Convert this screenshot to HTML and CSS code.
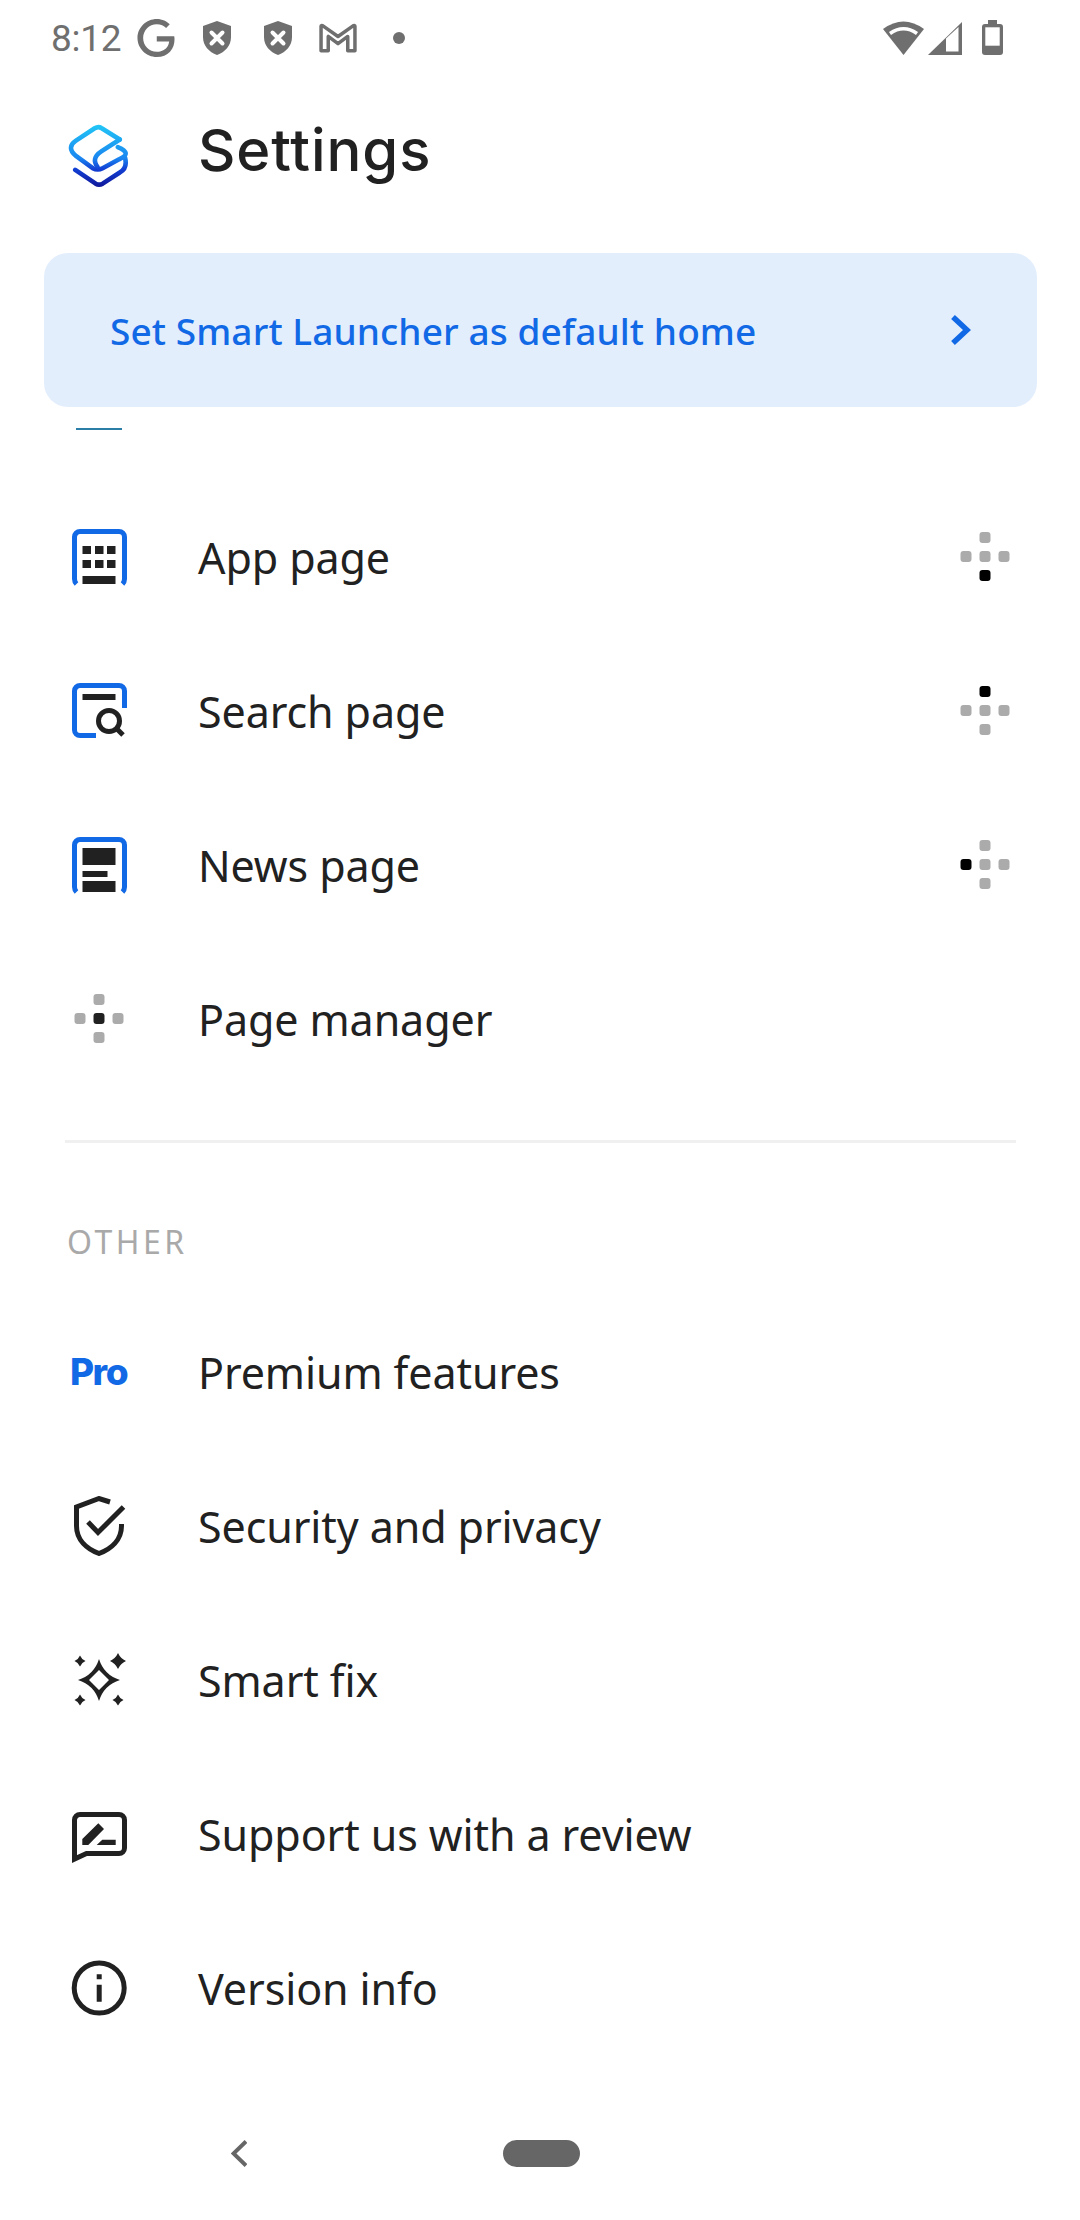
FILE: index.html
```html
<!DOCTYPE html>
<html lang="en">
<head>
<meta charset="utf-8">
<title>Settings</title>
<link rel="stylesheet" href="styles.css">
</head>
<body>
<div class="page">
  <header class="status">
    <span class="time">8:12</span>
    <svg class="si-g" viewBox="0 0 24 24"><path class="g" d="M12.48 10.92v3.28h7.84c-.24 1.84-.853 3.187-1.787 4.133-1.147 1.147-2.933 2.4-6.053 2.4-4.827 0-8.6-3.893-8.6-8.72s3.773-8.72 8.6-8.72c2.6 0 4.507 1.027 5.907 2.347l2.307-2.307C18.747 1.44 16.133 0 12.48 0 5.867 0 .307 5.387.307 12s5.56 12 12.173 12c3.573 0 6.267-1.173 8.373-3.36 2.16-2.16 2.84-5.213 2.84-7.667 0-.76-.053-1.467-.173-2.053H12.48z"/></svg>
    <svg class="si-shield" viewBox="0 0 28 34"><path class="g" d="M14 0 L28 5 V16 C28 25 22 31 14 34 C6 31 0 25 0 16 V5 Z"/><path class="wline" d="M8.5 11.5 L19.5 22.5 M19.5 11.5 L8.5 22.5"/></svg>
    <svg class="si-shield s2" viewBox="0 0 28 34"><path class="g" d="M14 0 L28 5 V16 C28 25 22 31 14 34 C6 31 0 25 0 16 V5 Z"/><path class="wline" d="M8.5 11.5 L19.5 22.5 M19.5 11.5 L8.5 22.5"/></svg>
    <svg class="si-m" viewBox="0 0 37 29"><path class="gline" d="M2 27 V3 Q2 2 3.5 2.5 L18.5 13 L33.5 2.5 Q35 2 35 3 V27 H28 V13 L18.5 20 L9 13 V27 Z"/></svg>
    <span class="si-dot"></span>
    <span class="status-right">
      <svg class="si-wifi" viewBox="0 0 41 34"><path class="g" d="M20.5 34 L0 8 Q20.5 -7 41 8 Z"/><path class="wband" d="M7 12.5 Q20.5 3 34 12.5"/></svg>
      <svg class="si-signal" viewBox="0 0 34 33"><path class="g" d="M0 33 L34 0 V33 Z"/><path class="w" d="M18 16.5 L30.5 5 V29.5 H18 Z"/></svg>
      <svg class="si-batt" viewBox="0 0 21 35"><rect class="g" x="6" y="0" width="9" height="5"/><rect class="g" x="0" y="4" width="21" height="31" rx="3"/><rect class="w" x="3.3" y="7.3" width="14.4" height="18.4"/></svg>
    </span>
  </header>

  <section class="head">
    <svg class="logo" viewBox="195 360 185 200">
      <defs>
        <linearGradient id="lg" gradientUnits="userSpaceOnUse" x1="0" y1="365" x2="0" y2="556">
          <stop offset="0" stop-color="#22c8f6"/>
          <stop offset=".55" stop-color="#1a86f0"/>
          <stop offset=".72" stop-color="#1240d4"/>
          <stop offset="1" stop-color="#10189a"/>
        </linearGradient>
      </defs>
      <path class="logo-s" d="M352 413 L296 378 Q287 372 276 379 L218 417 Q190 436 218 462 L270 500 Q285 508 300 500 L350 473 Q392 455 346 436"/>
      <path class="logo-s" d="M352 413 L296 449 Q264 470 285 497"/>
      <path class="logo-s" d="M217 505 L279 547 Q289 553 300 547 L352 513 Q376 500 368 468"/>
    </svg>
    <h1 class="title">Settings</h1>
  </section>

  <a class="banner">
    <span class="banner-text">Set Smart Launcher as default home</span>
    <svg class="banner-chev" viewBox="0 0 21 30"><path d="M3 2 L17 15 L3 28"/></svg>
  </a>

  <div class="clipped"></div>

  <ul class="list">
    <li class="row">
      <svg class="ico" viewBox="0 0 60 60"><path class="frame" d="M6.5 57 Q4.5 55 4.5 52 V10 a5.500 5.500 0 0 1 5.500-5.500 H49 a5.500 5.500 0 0 1 5.500 5.500 V52 Q54.500 55 52.500 57"/><path class="dk" d="M12.500 19h8.500v8h-8.500zM25 19h8.500v8H25zM37 19h8.500v8H37zM12.500 33h8.500v8h-8.500zM25 33h8.500v8H25zM37 33h8.500v8H37zM12.500 49h33v8h-33z"/></svg>
      <span class="label">App page</span>
      <svg class="ico dots" viewBox="0 0 60 60"><rect class="d" x="23.500" y="5" width="11" height="11" rx="3"/><rect class="d" x="4.500" y="24" width="11" height="11" rx="3"/><rect class="d" x="23.500" y="24" width="11" height="11" rx="3"/><rect class="d" x="42.500" y="24" width="11" height="11" rx="3"/><rect class="on" x="23.500" y="43" width="11" height="11" rx="3"/></svg>
    </li>
    <li class="row">
      <svg class="ico" viewBox="0 0 60 60"><path class="frame" d="M54.500 27 V10 a5.500 5.500 0 0 0-5.500-5.500 H10 a5.500 5.500 0 0 0-5.500 5.500 V49 a5.500 5.500 0 0 0 5.500 5.500 H26"/><path class="dk" d="M12.500 13h33v6h-33z"/><circle class="dkline" cx="39" cy="40" r="10.500"/><path class="dkline" d="M46.500 47.500 L53 54"/></svg>
      <span class="label">Search page</span>
      <svg class="ico dots" viewBox="0 0 60 60"><rect class="on" x="23.500" y="5" width="11" height="11" rx="3"/><rect class="d" x="4.500" y="24" width="11" height="11" rx="3"/><rect class="d" x="23.500" y="24" width="11" height="11" rx="3"/><rect class="d" x="42.500" y="24" width="11" height="11" rx="3"/><rect class="d" x="23.500" y="43" width="11" height="11" rx="3"/></svg>
    </li>
    <li class="row">
      <svg class="ico" viewBox="0 0 60 60"><path class="frame" d="M6.500 57 Q4.500 55 4.500 52 V10 a5.500 5.500 0 0 1 5.500-5.500 H49 a5.500 5.500 0 0 1 5.500 5.500 V52 Q54.500 55 52.500 57"/><path class="dk" d="M12.500 13h33v17h-33zM12.500 36h25v6h-25zM12.500 46h33v11h-33z"/></svg>
      <span class="label">News page</span>
      <svg class="ico dots" viewBox="0 0 60 60"><rect class="d" x="23.500" y="5" width="11" height="11" rx="3"/><rect class="on" x="4.500" y="24" width="11" height="11" rx="3"/><rect class="d" x="23.500" y="24" width="11" height="11" rx="3"/><rect class="d" x="42.500" y="24" width="11" height="11" rx="3"/><rect class="d" x="23.500" y="43" width="11" height="11" rx="3"/></svg>
    </li>
    <li class="row">
      <svg class="ico" viewBox="0 0 60 60"><rect class="d" x="23.500" y="5" width="11" height="11" rx="3"/><rect class="d" x="4.500" y="24" width="11" height="11" rx="3"/><rect class="dkf" x="23.500" y="24" width="11" height="11" rx="3"/><rect class="d" x="42.500" y="24" width="11" height="11" rx="3"/><rect class="d" x="23.500" y="43" width="11" height="11" rx="3"/></svg>
      <span class="label">Page manager</span>
    </li>
  </ul>

  <div class="divider"></div>
  <h2 class="section">OTHER</h2>

  <ul class="list">
    <li class="row">
      <span class="ico pro">Pro</span>
      <span class="label">Premium features</span>
    </li>
    <li class="row">
      <svg class="ico" viewBox="0 0 60 60"><path class="dkline" d="M40 6 L29 2.500 L6.500 11 V30 C6.500 44 17 53 29 57.500 C41 53 51.500 44 51.500 30 V28"/><path class="dkline" d="M18 26 L28 36.500 L53.500 11"/></svg>
      <span class="label">Security and privacy</span>
    </li>
    <li class="row">
      <svg class="ico" viewBox="0 0 60 60"><path class="dk eo" d="M29 9 Q34 25 50 30 Q34 35 29 51 Q24 35 8 30 Q24 25 29 9Z M29 20 L19 30 L29 40 L39 30Z"/><path class="dk" d="M10 5.500 Q11.600 9.400 15.500 11 Q11.600 12.600 10 16.500 Q8.400 12.600 4.500 11 Q8.400 9.400 10 5.500Z M48 3 Q50.500 8.500 56 11 Q50.500 13.500 48 19 Q45.500 13.500 40 11 Q45.500 8.500 48 3Z M10 44.500 Q11.600 48.400 15.500 50 Q11.600 51.600 10 55.500 Q8.400 51.600 4.500 50 Q8.400 48.400 10 44.500Z M48 44.500 Q49.600 48.400 53.500 50 Q49.600 51.600 48 55.500 Q46.400 51.600 42.500 50 Q46.400 48.400 48 44.500Z"/></svg>
      <span class="label">Smart fix</span>
    </li>
    <li class="row">
      <svg class="ico" viewBox="0 0 60 60"><path class="dkline" d="M4.500 55 V16 a5.500 5.500 0 0 1 5.500-5.500 H49 a5.500 5.500 0 0 1 5.500 5.500 V44 a5.500 5.500 0 0 1-5.500 5.500 H16.500 Z"/><path class="dk" d="M12.300 41 V35 L28.300 19.300 L34 25 L18.300 41Z M26.700 41 L32.300 35.700 H45.700 V41Z"/></svg>
      <span class="label">Support us with a review</span>
    </li>
    <li class="row">
      <svg class="ico" viewBox="0 0 60 60"><circle class="dkline" cx="29.200" cy="30" r="25"/><path class="dk" d="M26.700 16.300h5v5h-5zM26.700 26.700h5v17h-5z"/></svg>
      <span class="label">Version info</span>
    </li>
  </ul>

  <nav class="nav">
    <svg class="nav-back" viewBox="0 0 16 27"><path d="M15 1.500 L2.500 13.500 L15 25.500"/></svg>
    <span class="nav-home"></span>
  </nav>
</div>
</body>
</html>
```
FILE: styles.css
```css
* { box-sizing: border-box; }
html, body { margin: 0; padding: 0; background: #fff; }
body { font-family: "Noto Sans", "Open Sans", sans-serif; color: #212121; }
ul { list-style: none; margin: 0; padding: 0; }
h1, h2 { margin: 0; }
.page { width: 1080px; height: 2220px; overflow: hidden; display: flex; flex-direction: column; }

.status { height: 74px; flex: none; display: flex; align-items: flex-start; padding: 19px 77px 0 51px; }
.time { font-family: Roboto, sans-serif; font-size: 37px; line-height: 40px; color: #6f6f6f; width: 86px; letter-spacing: -.3px; }
.g { fill: #6f6f6f; }
.w { fill: #fff; }
.wline { stroke: #fff; stroke-width: 4; fill: none; stroke-linecap: round; }
.wband { stroke: #fff; stroke-width: 3.5; fill: none; }
.gline { stroke: #6f6f6f; stroke-width: 3.4; fill: none; stroke-linejoin: round; }
.si-g { width: 38px; height: 38px; margin-right: 28px; }
.si-shield { width: 28px; height: 34px; margin: 2px 33px 0 0; }
.si-shield.s2 { margin-right: 27px; }
.si-m { width: 38px; height: 30px; margin: 4px 36px 0 0; }
.si-dot { width: 12px; height: 12px; border-radius: 50%; background: #6f6f6f; margin-top: 13px; }
.status-right { margin-left: auto; display: flex; align-items: flex-start; }
.si-wifi { width: 41px; height: 34px; margin: 2px 4px 0 0; }
.si-signal { width: 34px; height: 33px; margin: 3px 20px 0 0; }
.si-batt { width: 21px; height: 35px; margin-top: 1px; }

.head { height: 179px; flex: none; display: flex; align-items: flex-start; padding: 48px 0 0 68px; }
.logo { width: 61px; height: 66px; flex: none; }
.logo-s { fill: none; stroke: url(#lg); stroke-width: 14; stroke-linecap: round; stroke-linejoin: round; }
.title { font-family: Inter, sans-serif; font-weight: 500; font-size: 58px; line-height: 66px; color: #212121; margin: -5px 0 0 69px; letter-spacing: .9px; }

.banner { height: 154px; flex: none; margin: 0 43px 0 44px; background: #e3eefd; border-radius: 24px; display: flex; align-items: center; justify-content: space-between; padding: 0 66px; }
.banner-text { font-size: 37px; font-weight: 500; color: #1269e6; letter-spacing: .1px; }
.banner-chev { width: 21px; height: 30px; }
.banner-chev path { fill: none; stroke: #1269e6; stroke-width: 5.5; }

.clipped { width: 46px; height: 2px; flex: none; margin: 21px 0 50px 76px; background: #2b7ea8; }

.row { height: 154px; display: flex; align-items: center; padding: 0 64px 0 70px; }
.ico { width: 60px; height: 60px; flex: none; margin-right: 68px; }
.label { font-size: 43px; color: #212121; font-weight: 450; letter-spacing: -.1px; }
.dots { margin: 0 0 0 auto; }
.frame { fill: none; stroke: #1269e6; stroke-width: 5; }
.dk, .dkf { fill: #212121; }
.eo { fill-rule: evenodd; }
.dkline { fill: none; stroke: #212121; stroke-width: 5; }
.d { fill: #ababab; }
.on { fill: #000; }
.pro { font-family: Inter, sans-serif; font-weight: 800; font-size: 37px; color: #1269e6; letter-spacing: -1.5px; line-height: 60px; }

.divider { height: 3px; flex: none; margin: 44px 64px 0 65px; background: #f0f0f0; }
.section { height: 152px; flex: none; padding: 77px 0 0 67px; font-size: 32px; line-height: 44px; font-weight: 400; letter-spacing: 3.5px; color: #a9a9a9; }

.nav { display: flex; align-items: center; padding: 75px 0 0 231px; }
.nav-back { width: 16px; height: 27px; margin-right: 256px; }
.nav-back path { fill: none; stroke: #666; stroke-width: 4; }
.nav-home { width: 77px; height: 27px; border-radius: 14px; background: #666; }
```
